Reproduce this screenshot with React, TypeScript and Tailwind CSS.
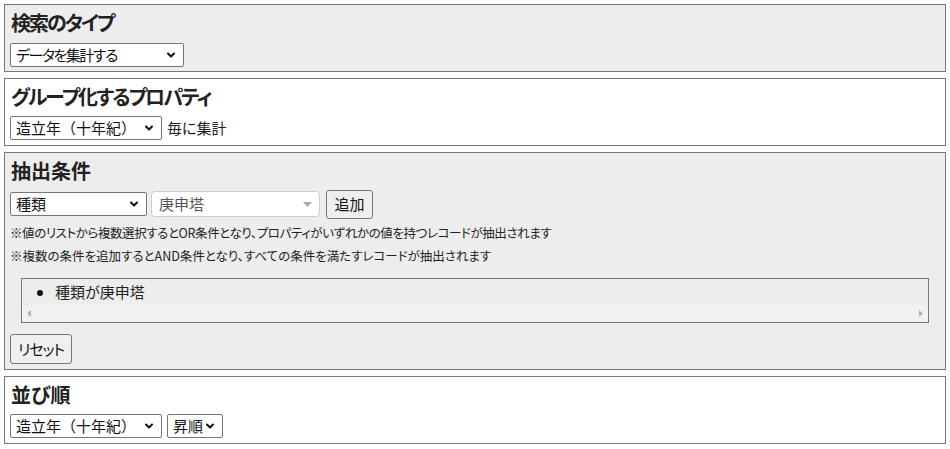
import { ChevronDown } from "lucide-react";

const font = "[font-family:'Noto_Sans_CJK_JP',sans-serif] [font-feature-settings:'palt']";

const Select = ({ value, width, tight }: { value: string; width: string; tight?: string }) => (
    <div className={`inline-flex h-[24px] items-center rounded-[2px] border border-[#767676] bg-white ${width}`}>
        <span className={`flex-1 whitespace-nowrap pl-[5px] text-[15px] leading-[22px] text-[#111] ${tight ?? ""}`}>
            {value}
        </span>
        <ChevronDown size={12} strokeWidth={4} className="mr-[6px] shrink-0 text-[#111]" />
    </div>
);

const Section = ({
    title,
    gray,
    tight,
    pb = "pb-[5px]",
    children
}: {
    title: string;
    gray?: boolean;
    tight?: string;
    pb?: string;
    children: React.ReactNode;
}) => (
    <section
        className={`border border-[#777] px-[5px] pt-[4px] ${pb} ${gray ? "bg-[#ededed]" : "bg-white"}`}
    >
        <h3
            className={`mb-[5px] flex h-[28px] items-center pl-[1px] text-[20px] font-bold text-[#222] ${tight ?? ""}`}
        >
            {title}
        </h3>
        {children}
    </section>
);

export default function App() {
    return (
        <main className={`flex w-[950px] flex-col gap-[6px] bg-white px-[4px] pt-[4px] ${font}`}>
            <Section title="検索のタイプ" gray tight="tracking-[-2px]" pb="pb-[4px]">
                <Select value="データを集計する" width="w-[174px]" tight="tracking-[-1.5px]" />
            </Section>

            <Section title="グループ化するプロパティ" tight="tracking-[-2px]">
                <div className="flex items-center gap-[5px]">
                    <Select value="造立年（十年紀）" width="w-[152px]" tight="[font-feature-settings:normal]" />
                    <span className="text-[15px] text-[#222]">毎に集計</span>
                </div>
            </Section>

            <Section title="抽出条件" gray>
                <div className="flex h-[28px] items-center">
                    <Select value="種類" width="w-[137px]" />
                    <div className="ml-[4px] flex h-[26px] w-[169px] items-center rounded-[4px] border border-[#ccc] bg-white">
                        <span className="flex-1 pl-[7px] text-[15px] text-[#555]">庚申塔</span>
                        <svg width="9" height="5" viewBox="0 0 9 5" className="mr-[7px]">
                            <path d="M0 0h9L4.5 5z" fill="#aaa" />
                        </svg>
                    </div>
                    <button className="ml-[6px] flex h-[29px] w-[47px] items-center justify-center rounded-[3px] border border-[#767676] bg-[#efefef] text-[15px] text-[#111]">
                        追加
                    </button>
                </div>
                <div className="mt-[3px] text-[12.5px] leading-[23px] text-[#222]">
                    <p className="tracking-[-0.4px]">
                        ※値のリストから複数選択するとOR条件となり、プロパティがいずれかの値を持つレコードが抽出されます
                    </p>
                    <p>※複数の条件を追加するとAND条件となり、すべての条件を満たすレコードが抽出されます</p>
                </div>
                <div className="mx-[11px] mt-[11px] border border-[#777]">
                    <ul className="flex h-[26px] items-center pl-[15px] pt-[1px]">
                        <li className="flex items-center gap-[12px] text-[15px] text-[#222]">
                            <span className="h-[6px] w-[6px] rounded-full bg-[#111]" />
                            種類が庚申塔
                        </li>
                    </ul>
                    <div className="flex h-[17px] items-center justify-between bg-[#f1f1f1] px-[5px]">
                        <svg width="4" height="7" viewBox="0 0 4 7">
                            <path d="M4 0v7L0 3.5z" fill="#b0b0b0" />
                        </svg>
                        <svg width="4" height="7" viewBox="0 0 4 7">
                            <path d="M0 0v7l4-3.5z" fill="#b0b0b0" />
                        </svg>
                    </div>
                </div>
                <button className="mt-[11px] flex h-[30px] w-[62px] items-center justify-center rounded-[3px] border border-[#767676] bg-[#efefef] text-[15px] tracking-[-1px] text-[#111]">
                    リセット
                </button>
            </Section>

            <Section title="並び順">
                <div className="flex items-center gap-[5px]">
                    <Select value="造立年（十年紀）" width="w-[152px]" tight="[font-feature-settings:normal]" />
                    <Select value="昇順" width="w-[56px]" />
                </div>
            </Section>
        </main>
    );
}
